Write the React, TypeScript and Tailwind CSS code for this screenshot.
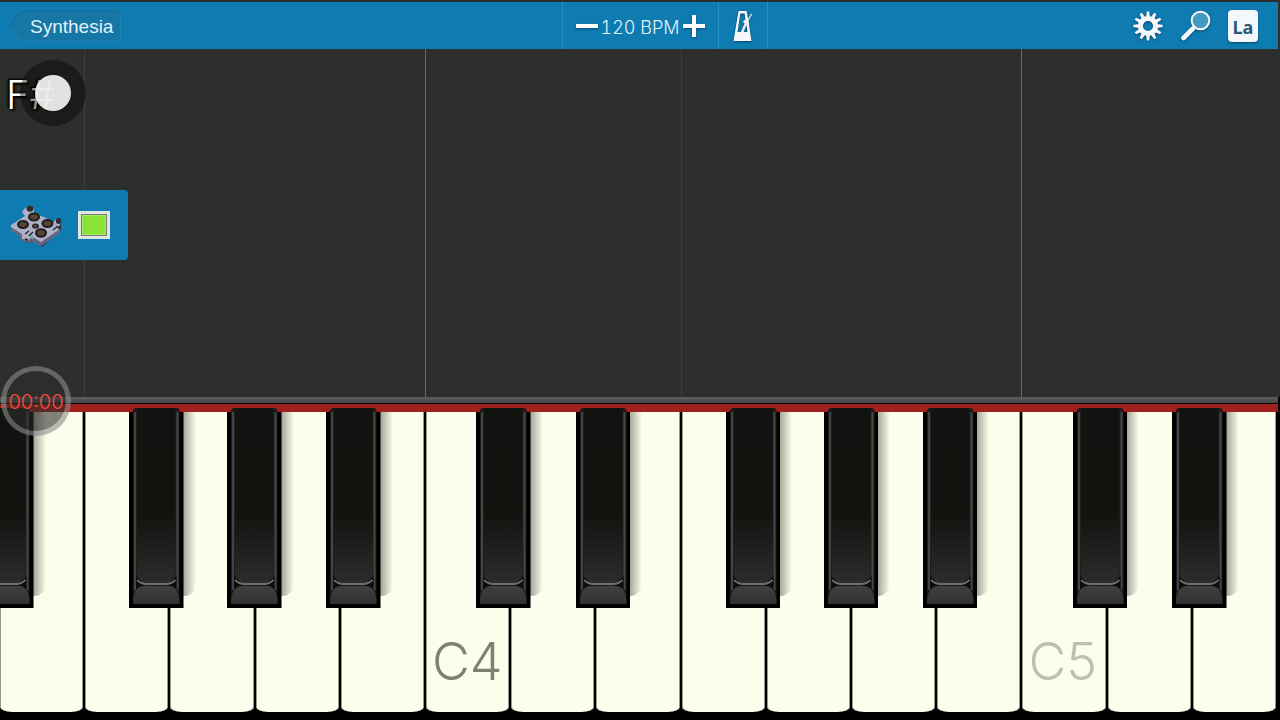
import clsx from "clsx";

type Note = "C" | "D" | "E" | "F" | "G" | "A" | "B";

interface PianoKey {
  note: Note;
  octave: number;
}

const keys: PianoKey[] = [
  { note: "E", octave: 3 },
  { note: "F", octave: 3 },
  { note: "G", octave: 3 },
  { note: "A", octave: 3 },
  { note: "B", octave: 3 },
  { note: "C", octave: 4 },
  { note: "D", octave: 4 },
  { note: "E", octave: 4 },
  { note: "F", octave: 4 },
  { note: "G", octave: 4 },
  { note: "A", octave: 4 },
  { note: "B", octave: 4 },
  { note: "C", octave: 5 },
  { note: "D", octave: 5 },
  { note: "E", octave: 5 },
];

// How far into its white key each sharp starts
const sharpOffset: Partial<Record<Note, string>> = {
  C: "left-[60%]",
  D: "left-[77%]",
  F: "left-[53%]",
  G: "left-[68%]",
  A: "left-[84%]",
};

function GearIcon() {
  const teeth = [0, 30, 60, 90, 120, 150, 180, 210, 240, 270, 300, 330];
  return (
    <svg viewBox="0 0 32 32" className="h-8 w-8 drop-shadow-[0_1px_1px_rgba(0,30,60,0.6)]" aria-hidden="true">
      {teeth.map((angle) => (
        <path key={angle} d="M14 8 L14.8 1.4 H17.2 L18 8Z" fill="#f5f8fa" transform={`rotate(${angle} 16 16)`} />
      ))}
      <circle cx="16" cy="16" r="7.6" fill="none" stroke="#f5f8fa" strokeWidth="5" />
    </svg>
  );
}

function SearchIcon() {
  return (
    <svg viewBox="0 0 32 32" className="h-8 w-8 drop-shadow-[0_1px_1px_rgba(0,30,60,0.6)]" aria-hidden="true">
      <path d="M3.5 28 L13 18.5" stroke="#f5f8fa" strokeWidth="4.6" strokeLinecap="round" />
      <circle cx="20.5" cy="10.5" r="8.8" fill="#459ac4" stroke="#f5f8fa" strokeWidth="2" />
    </svg>
  );
}

function MetronomeIcon() {
  return (
    <svg viewBox="0 0 24 32" className="h-8 w-6 drop-shadow-[0_1px_1px_rgba(0,30,60,0.6)]" aria-hidden="true">
      <path
        d="M7.5 1 H15.5 L17 8 L20.5 31 H2.5 Z M9.3 3.5 L6.5 22 H10 L14.5 11 L13.7 3.5 Z M15.5 15 L12.6 22 H16.5 Z"
        fill="#f5f8fa"
        fillRule="evenodd"
      />
      <path d="M10.5 23 L20.5 4" stroke="#d9e9f1" strokeWidth="1.5" />
      <path d="M12.6 11 L17.4 13.6" stroke="#f5f8fa" strokeWidth="3" />
    </svg>
  );
}

function PercussionIcon() {
  const pads = [
    [24, 12, 6, 4.5],
    [13, 19.5, 6, 4.5],
    [37.5, 18.5, 6, 4.5],
    [31, 28, 6, 4.8],
    [25.5, 21, 3.4, 2.6],
  ];
  return (
    <svg viewBox="0 -2 52 44" className="h-11 w-13" aria-hidden="true">
      <path d="M2 23 L13 31 L12 36 L18 38 L24 36 L32 42 L51 25 V19 L46 17 L33 15 L21 6 L18 10 L2 21Z" fill="#37333f" />
      <path d="M1 20 L15 11 L12 7 L14 4 L19 1 L24 4 V8 L36 13 L44 17 L46 14 L50 15 V20 L47 23 L50 25 L31 38 L22 31 L19 36 L12 34 V30 L1 23Z" fill="#adb0c8" />
      <path d="M1 22 L12 29 V34 L18 36 L22 32 L31 37 L50 24 V28 L31 41 L22 36 L18 38 L10 35 V31 L1 26Z" fill="#68667e" />
      {pads.map(([cx, cy, rx, ry]) => (
        <g key={cx}>
          <ellipse cx={cx} cy={cy} rx={rx} ry={ry} fill="#211c1d" />
          <ellipse cx={cx} cy={cy} rx={rx * 0.65} ry={ry * 0.55} fill="#544537" />
        </g>
      ))}
      <ellipse cx="20" cy="3.8" rx="3.4" ry="3" fill="#342925" />
      <ellipse cx="48.5" cy="16" rx="2.6" ry="3" fill="#302a31" />
      <path d="M15 29 L19 26 M19 31 L23 27 M43 25 L48 21 M15 34 L18 35" stroke="#27242d" strokeWidth="1.5" />
      <path d="M20 31.5 L24 33" stroke="#58d794" strokeWidth="1.4" />
    </svg>
  );
}

function Header() {
  return (
    <header className="mt-0.5 mr-0.5 grid h-[47px] shrink-0 grid-cols-[11fr_auto_10fr] items-stretch bg-[#0e7cb0]">
      <div className="flex items-center pl-2">
        <button type="button" className="relative flex h-8 items-center pt-1 pr-2 pl-[22px] text-[19px] text-[#e3f2f9]">
          <svg viewBox="0 0 116 32" preserveAspectRatio="none" className="absolute inset-0 h-full w-full" aria-hidden="true">
            <path d="M1 16 L11 3 Q13 1 16 1 H111 Q115 1 115 5 V27 Q115 31 111 31 H16 Q13 31 11 29Z" fill="#1676a6" stroke="#2385b3" />
            <path d="M1 16 L11 3 Q13 1 16 1 H111 Q115 1 115 5" fill="none" stroke="#0c6896" />
          </svg>
          <span className="relative">Synthesia</span>
        </button>
      </div>
      <div className="flex items-stretch border-x border-[#2a8fbe] text-[#e3f2f9]">
        <div className="flex items-center px-3">
          <button type="button" aria-label="Slower" className="flex h-6 w-6 items-center justify-center">
            <svg viewBox="0 0 24 24" className="h-6 w-6 drop-shadow-[0_1px_1px_rgba(0,30,60,0.5)]" aria-hidden="true">
              <path d="M1 12 H23" stroke="#fff" strokeWidth="4" />
            </svg>
          </button>
          <span className="w-[83px] pt-1 text-center font-[Inter] text-lg font-light whitespace-nowrap tabular-nums">
            120 BPM
          </span>
          <button type="button" aria-label="Faster" className="flex h-6 w-6 items-center justify-center">
            <svg viewBox="0 0 24 24" className="h-6 w-6 drop-shadow-[0_1px_1px_rgba(0,30,60,0.5)]" aria-hidden="true">
              <path d="M1 12 H23 M12 1 V23" stroke="#fff" strokeWidth="4" />
            </svg>
          </button>
        </div>
        <button type="button" aria-label="Metronome" className="flex items-center border-l border-[#2a8fbe] px-3">
          <MetronomeIcon />
        </button>
      </div>
      <div className="flex items-center justify-end gap-4 pr-5">
        <button type="button" aria-label="Settings">
          <GearIcon />
        </button>
        <button type="button" aria-label="Zoom">
          <SearchIcon />
        </button>
        <button
          type="button"
          className="flex h-8 w-[30px] items-end justify-center rounded-sm bg-[#f5f8fa] pb-[3px] font-['Noto_Sans'] text-lg leading-6 font-bold text-[#285b78] shadow-[0_1px_2px_rgba(0,30,60,0.6)]"
        >
          La
        </button>
      </div>
    </header>
  );
}

function NoteLanes() {
  return (
    <div className="-ml-px flex flex-1 pr-[3px]" aria-hidden="true">
      {keys.map(({ note, octave }) => (
        <div
          key={note + octave}
          className={clsx(
            "flex-1 border-l",
            note === "C" && "border-[#6b6c6a]",
            note === "F" && "border-[#3e3f3d]",
            note !== "C" && note !== "F" && "border-transparent"
          )}
        />
      ))}
    </div>
  );
}

function Sharp({ label, offset }: { label: string; offset: string }) {
  return (
    <button
      type="button"
      aria-label={label}
      className={clsx("absolute -top-1 z-10 h-[200px] w-[64%]", offset)}
    >
      <span className="absolute top-1 -right-3 bottom-3 w-4 rounded-br-xl bg-linear-to-r from-[#8c8d80] to-transparent" />
      <svg viewBox="0 0 54 200" preserveAspectRatio="none" className="absolute inset-0 h-full w-full" aria-hidden="true">
        <defs>
          <linearGradient id="sharpTop" x1="0" y1="0" x2="0" y2="1">
            <stop offset="0" stopColor="#10130f" />
            <stop offset="0.6" stopColor="#11130f" />
            <stop offset="1" stopColor="#2c2e2d" />
          </linearGradient>
          <linearGradient id="sharpFront" x1="0" y1="0" x2="0" y2="1">
            <stop offset="0" stopColor="#3e403f" />
            <stop offset="1" stopColor="#303231" />
          </linearGradient>
        </defs>
        <path d="M0 4 H4 Q4 0 8 0 H46 Q50 0 50 4 H54 V200 H0Z" fill="#000" />
        <path d="M4 4 Q5 0 8 0 H46 Q49 0 50 4 V196 H4Z" fill="#1c1e1d" />
        <path d="M8 0 H46 V176 H8Z" fill="url(#sharpTop)" />
        <path d="M6 4 V182 M48 4 V182" stroke="#434644" strokeWidth="2" />
        <path d="M7 168 V184 L16 177Z M47 168 V184 L38 177Z" fill="#0b0d0b" />
        <path d="M4 196 V192 Q6 178 14 178 H40 Q48 178 50 192 V196Z" fill="url(#sharpFront)" />
        <path d="M8 172 Q12 176 17 176 H37 Q42 176 46 172" fill="none" stroke="#6c6f6d" strokeWidth="1.8" />
      </svg>
    </button>
  );
}

function Keyboard() {
  return (
    <section aria-label="Keyboard" className="bg-black pb-2">
      <div className="mr-0.5 h-[7px] border-b border-black bg-linear-to-b from-[#5c5f5d] to-[#454846]" />
      <div className="mr-0.5 h-2 bg-[#a0201d]" />
      <div className="-ml-px flex h-[300px] pr-[3px]">
        {keys.map(({ note, octave }, i) => {
          const offset = sharpOffset[note];
          return (
            <div key={note + octave} className="relative flex-1">
              <button
                type="button"
                aria-label={note + octave}
                className="flex h-full w-full items-end border-x border-black pb-[15px]"
              >
                <span className="absolute inset-x-px inset-y-0 border-x border-[#9b9c8e] bg-[#fcfdec] [border-radius:0_0_12px_12px/0_0_5px_5px]" />
                {note === "C" && (
                  <span
                    className={clsx(
                      "relative pl-1.5 font-[Inter] text-[52px] leading-[70px] font-light",
                      octave === 4 ? "text-[#7f8073]" : "text-[#bebfb0]"
                    )}
                  >
                    {note + octave}
                  </span>
                )}
              </button>
              {i === 0 && <Sharp label="D#3" offset="-left-[23%]" />}
              {offset && <Sharp label={`${note}#${octave}`} offset={offset} />}
            </div>
          );
        })}
      </div>
    </section>
  );
}

export default function App() {
  return (
    <div className="relative flex min-h-screen flex-col overflow-hidden bg-[#2d2f2c] font-['Liberation_Sans',sans-serif]">
      <Header />
      <main className="relative flex flex-1 flex-col">
        <NoteLanes />

        {/* Last played note and the touch point over it */}
        <p className="absolute top-[21px] left-1.5 font-[Inter] text-[40px] leading-[50px] font-light text-white [text-shadow:0_0_3px_#000,2px_2px_2px_#000,-2px_-1px_2px_#000]">
          F#
        </p>
        <div className="absolute top-[11px] left-5 flex h-[66px] w-[66px] items-center justify-center rounded-full bg-black/40">
          <div className="h-9 w-9 rounded-full bg-[#f3f4f2]/92" />
        </div>

        {/* Instrument panel */}
        <div className="absolute top-[141px] left-0 flex h-[70px] w-32 items-center rounded-r-sm bg-[#0e7cb0] pl-2.5">
          <button type="button" aria-label="Percussion">
            <PercussionIcon />
          </button>
          <button
            type="button"
            aria-label="Hand color"
            className="ml-4 h-7 w-8 border-3 border-[#e3e5e2] bg-[#8ae234] shadow-[inset_0_0_0_1px_#777b73,inset_0_0_0_2px_#a6ef62]"
          />
        </div>
      </main>
      <Keyboard />

      {/* Recording timer */}
      <div className="absolute bottom-[284px] left-px z-20 flex h-[70px] w-[70px] items-center justify-center rounded-full border-5 border-[#8c8c8c]/60 bg-[#2d2e2c]/60 bg-clip-padding">
        <time className="pt-0.5 font-[Inter] text-xl font-light text-[#ff4b3e]">00:00</time>
      </div>
    </div>
  );
}
